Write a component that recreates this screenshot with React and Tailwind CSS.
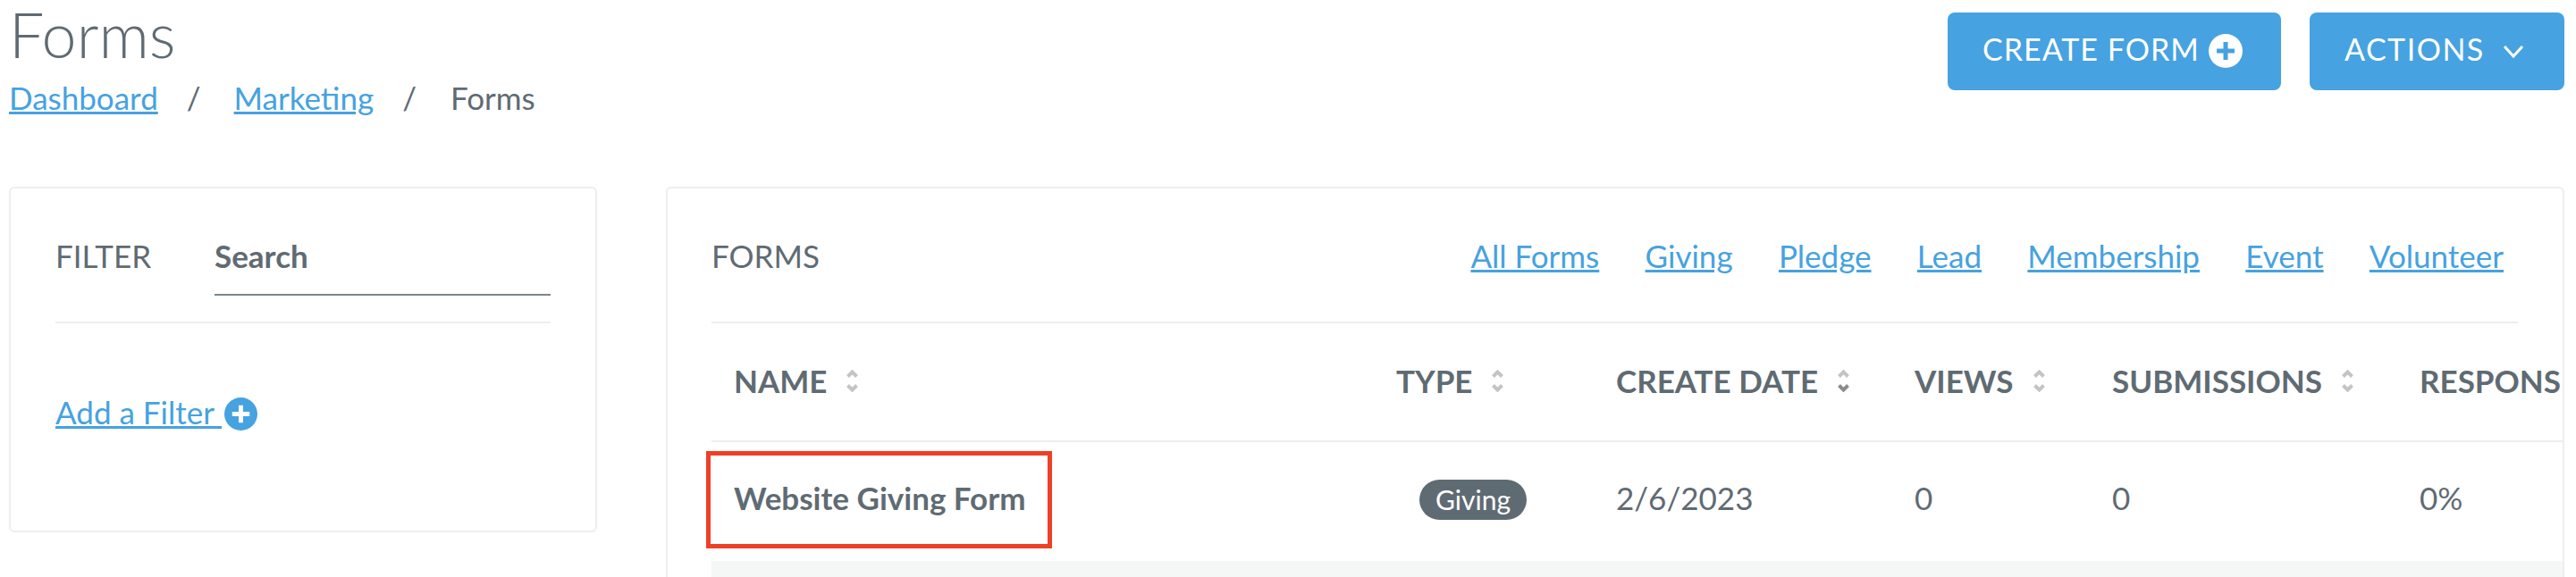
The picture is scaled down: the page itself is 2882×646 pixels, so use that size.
import React from 'react';

function PlusCircle({ className, bg, fg }) {
  return (
    <svg viewBox="0 0 38 38" className={className}>
      <circle cx="19" cy="19" r="19" fill={bg} />
      <path d="M19 9v20M9 19h20" stroke={fg} strokeWidth="5" />
    </svg>
  );
}

function SortIcon({ active }) {
  return (
    <svg viewBox="0 0 13 25" className="w-[13px] h-[25px] ml-[22px] shrink-0">
      <path d="M1.5 7.5L6.5 2.5L11.5 7.5" fill="none" stroke="#c4c4c4" strokeWidth="4" />
      <path d="M1.5 17.5L6.5 22.5L11.5 17.5" fill="none" stroke={active ? '#8c8c8c' : '#c4c4c4'} strokeWidth="4" />
    </svg>
  );
}

const filters = ['All Forms', 'Giving', 'Pledge', 'Lead', 'Membership', 'Event', 'Volunteer'];
const columns = ['NAME', 'TYPE', 'CREATE DATE', 'VIEWS', 'SUBMISSIONS', 'RESPONSE RATE'];
const gridCols = 'grid grid-cols-[741px_246px_334px_221px_344px_400px]';

export default function App() {
  return (
    <div className="w-[2882px] h-[646px] overflow-hidden bg-white text-[#5f6b73] font-['Lato',sans-serif] text-[35px]">
      {/* Page Header */}
      <div className="h-[209px] flex justify-between pl-[10px] pr-[13px]">
        <div>
          <h1 className="pt-[1px] text-[70px] leading-[74px] font-light">Forms</h1>
          <div className="mt-[14px] flex leading-[40px]">
            <a className="text-[#46a2e0] underline">Dashboard</a>
            <span className="ml-[32px]">/</span>
            <a className="ml-[37px] text-[#46a2e0] underline">Marketing</a>
            <span className="ml-[32px]">/</span>
            <span className="ml-[38px]">Forms</span>
          </div>
        </div>
        <div className="flex gap-[32px] pt-[14px] items-start">
          <button className="h-[87px] w-[373px] pl-[39px] pb-[6px] bg-[#46a2e0] rounded-[8px] text-[34px] text-white flex items-center tracking-[1px]">
            CREATE FORM
            <PlusCircle className="w-[38px] h-[38px] ml-[10px] mt-[4px]" bg="#ffffff" fg="#46a2e0" />
          </button>
          <button className="h-[87px] w-[285px] pl-[39px] pb-[6px] bg-[#46a2e0] rounded-[8px] text-[34px] text-white flex items-center tracking-[1.5px]">
            ACTIONS
            <svg viewBox="0 0 24 16" className="w-[24px] h-[16px] ml-[20px] mt-[4px]">
              <path d="M2 3l10 11L22 3" fill="none" stroke="#ffffff" strokeWidth="3" />
            </svg>
          </button>
        </div>
      </div>

      <div className="flex items-start pl-[10px] pr-[13px] gap-[77px]">
        {/* Filter Panel */}
        <div className="w-[658px] h-[387px] shrink-0 border-2 border-[#eeeeee] rounded-[6px] px-[50px]">
          <div className="flex h-[151px] border-b-2 border-[#eeeeee]">
            <span className="w-[178px] pt-[55px] leading-[40px]">FILTER</span>
            <span className="flex-1 h-[120px] pt-[55px] leading-[40px] font-bold border-b-2 border-[#7b868d]">Search</span>
          </div>
          <div className="mt-[73px] flex items-center">
            <a className="text-[#46a2e0] underline whitespace-pre">Add a Filter </a>
            <PlusCircle className="w-[37px] h-[37px] ml-[3px] mt-[4px]" bg="#46a2e0" fg="#ffffff" />
          </div>
        </div>

        {/* Forms Panel */}
        <div className="flex-1 min-w-0 h-[600px] border-2 border-b-0 border-[#eeeeee] rounded-t-[6px] pl-[49px] overflow-hidden">
          <div className="h-[151px] mr-[50px] flex justify-between border-b-2 border-[#eeeeee] pt-[55px] leading-[40px]">
            <span>FORMS</span>
            <div className="flex gap-[51.3px] pr-[16px]">
              {filters.map(f => (
                <a key={f} className="text-[#46a2e0] underline">{f}</a>
              ))}
            </div>
          </div>

          <div className={`${gridCols} h-[133px] border-b-2 border-[#eeeeee] pl-[25px] pb-[3px] items-center font-bold`}>
            {columns.map((c, i) => (
              <div key={c} className="flex items-center whitespace-nowrap">
                {c}
                {i < 5 && <SortIcon active={i === 2} />}
              </div>
            ))}
          </div>

          <div className={`${gridCols} relative h-[133px] pl-[25px] pb-[9px] items-center`}>
            <div className="font-bold whitespace-nowrap">Website Giving Form</div>
            <div>
              <span className="ml-[26px] mt-[6px] inline-flex items-center h-[45px] px-[18px] rounded-full bg-[#5f6b73] text-white text-[30px]">Giving</span>
            </div>
            <div>2/6/2023</div>
            <div>0</div>
            <div>0</div>
            <div>0%</div>
            <div className="absolute left-[-6px] top-[10px] w-[387px] h-[109px] border-[5px] border-[#ee4026]" />
          </div>
          <div className="h-[40px] bg-[#f5f6f6]" />
        </div>
      </div>
    </div>
  );
}
